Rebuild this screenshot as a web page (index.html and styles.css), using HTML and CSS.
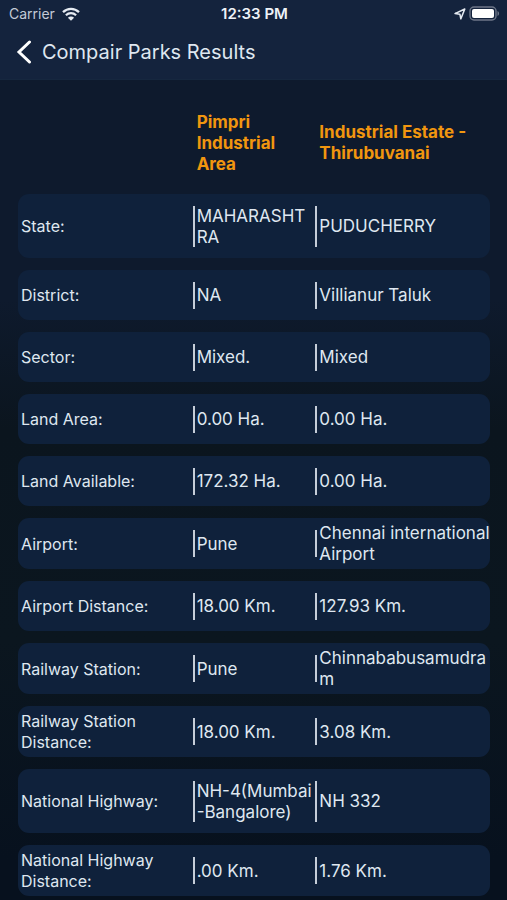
FILE: index.html
```html
<!DOCTYPE html>
<html lang="en">
<head>
<meta charset="utf-8">
<meta name="viewport" content="width=device-width, initial-scale=1">
<title>Compair Parks Results</title>
<link rel="stylesheet" href="styles.css">
</head>
<body>
<header class="top">
  <div class="status">
    <div class="status-side">
      <span class="carrier">Carrier</span>
      <svg class="wifi" viewBox="0 0 18 14" width="18" height="14" aria-hidden="true">
        <path d="M1 5.200C5.600.8 12.400.8 17 5.200" fill="none" stroke="currentColor" stroke-width="2.300"/>
        <path d="M3.900 8.200C6.800 5.400 11.200 5.400 14.100 8.200" fill="none" stroke="currentColor" stroke-width="2.200"/>
        <path d="M9 13.800 5.900 10.700C7.700 9.100 10.300 9.100 12.100 10.700Z" fill="currentColor"/>
      </svg>
    </div>
    <span class="time">12:33 PM</span>
    <div class="status-side status-end">
      <svg class="location" viewBox="0 0 12 12" width="12" height="12" aria-hidden="true">
        <path d="M1 5.600 10.800 1 6.800 10.900 5.900 6.200Z" fill="none" stroke="currentColor" stroke-width="1.500" stroke-linejoin="round"/>
      </svg>
      <svg class="battery" viewBox="0 0 31 15" width="31" height="15" aria-hidden="true">
        <rect x="1" y="1" width="26" height="13" rx="4" fill="none" stroke="#6d7688" stroke-width="1.400"/>
        <rect x="3" y="3" width="22" height="9" rx="2" fill="#fff"/>
        <path d="M28.500 5C30.600 5.800 30.600 9.200 28.500 10Z" fill="#6d7688"/>
      </svg>
    </div>
  </div>
  <div class="nav">
    <button class="back" type="button" aria-label="Back">
      <svg viewBox="0 0 16 24" width="16" height="24" aria-hidden="true">
        <path d="M13.500 2 3 12 13.500 22" fill="none" stroke="currentColor" stroke-width="3" stroke-linecap="round"/>
      </svg>
    </button>
    <h1>Compair Parks Results</h1>
  </div>
</header>
<main>
  <table class="compare">
    <colgroup><col class="col-label"><col class="col-first"><col class="col-second"></colgroup>
    <thead>
      <tr><td></td><th scope="col">Pimpri Industrial Area</th><th scope="col">Industrial Estate - Thirubuvanai</th></tr>
    </thead>
    <tbody>
      <tr class="tall"><th scope="row">State:</th><td>MAHARASHTRA</td><td>PUDUCHERRY</td></tr>
      <tr><th scope="row">District:</th><td>NA</td><td>Villianur Taluk</td></tr>
      <tr><th scope="row">Sector:</th><td>Mixed.</td><td>Mixed</td></tr>
      <tr><th scope="row">Land Area:</th><td>0.00 Ha.</td><td>0.00 Ha.</td></tr>
      <tr><th scope="row">Land Available:</th><td>172.32 Ha.</td><td>0.00 Ha.</td></tr>
      <tr><th scope="row">Airport:</th><td>Pune</td><td>Chennai international Airport</td></tr>
      <tr><th scope="row">Airport Distance:</th><td>18.00 Km.</td><td>127.93 Km.</td></tr>
      <tr><th scope="row">Railway Station:</th><td>Pune</td><td>Chinnababusamudram</td></tr>
      <tr><th scope="row">Railway Station Distance:</th><td>18.00 Km.</td><td>3.08 Km.</td></tr>
      <tr class="tall"><th scope="row">National Highway:</th><td>NH-4(Mumbai<wbr><span class="keep">-Bangalore)</span></td><td>NH 332</td></tr>
      <tr><th scope="row">National Highway Distance:</th><td>.00 Km.</td><td>1.76 Km.</td></tr>
    </tbody>
  </table>
</main>
</body>
</html>
```
FILE: styles.css
```css
* {
  box-sizing: border-box;
}

body {
  margin: 0;
  min-height: 100vh;
  background: linear-gradient(#0e1a2d 0, #0e1a2d 300px, #0b151e 430px, #0b161f 640px, #07111e 860px);
  color: #dfe7f0;
  font-family: Inter, "Liberation Sans", sans-serif;
  font-size: 17px;
  line-height: 21px;
}

.top {
  height: 80px;
  background: #14233d;
  border-bottom: 1px solid #16273f;
}

.status {
  display: grid;
  grid-template-columns: 1fr auto 1fr;
  align-items: center;
  height: 27px;
  padding: 0 7px 0 9px;
  font-size: 14px;
}

.status-side {
  display: flex;
  align-items: center;
  gap: 7px;
}

.status-end {
  justify-content: flex-end;
  gap: 3px;
}

.carrier {
  color: #c3cad6;
}

.time {
  color: #eef2f7;
  font-size: 15px;
  font-weight: 600;
}

.wifi,
.location {
  color: #e6ebf2;
}

.nav {
  display: flex;
  align-items: center;
  gap: 10px;
  height: 50px;
  padding-left: 16px;
}

.back {
  display: flex;
  padding: 0;
  border: 0;
  background: none;
  color: #fff;
  cursor: pointer;
}

h1 {
  margin: 0;
  font-size: 20px;
  font-weight: 400;
  line-height: 24px;
}

main {
  padding: 0 17px 0 18px;
}

.compare {
  width: 100%;
  margin-bottom: -8px;
  table-layout: fixed;
  border-collapse: separate;
  border-spacing: 0 12px;
}

.col-label,
.col-second {
  width: 37%;
}

.col-first {
  width: 26%;
}

th,
td {
  padding: 5px 0 4px 4px;
  font-weight: 400;
  text-align: left;
  vertical-align: middle;
  overflow-wrap: anywhere;
}

thead th {
  height: 90px;
  padding-top: 16px;
  padding-right: 20px;
  color: #f1960f;
  font-weight: 700;
}

tbody th,
tbody td {
  height: 50px;
  background-color: #0f213b;
}

tbody th {
  padding-left: 3px;
  padding-right: 20px;
  border-radius: 11px 0 0 11px;
  font-size: 16px;
}

tbody td {
  background-image: linear-gradient(#c5cdd8, #c5cdd8);
  background-repeat: no-repeat;
  background-position: 0 center;
  background-size: 2px 27px;
}

tbody td:last-child {
  border-radius: 0 11px 11px 0;
}

.tall th,
.tall td {
  height: 64px;
}

.tall td {
  background-size: 2px 41px;
}

.keep {
  display: inline-block;
}
```
